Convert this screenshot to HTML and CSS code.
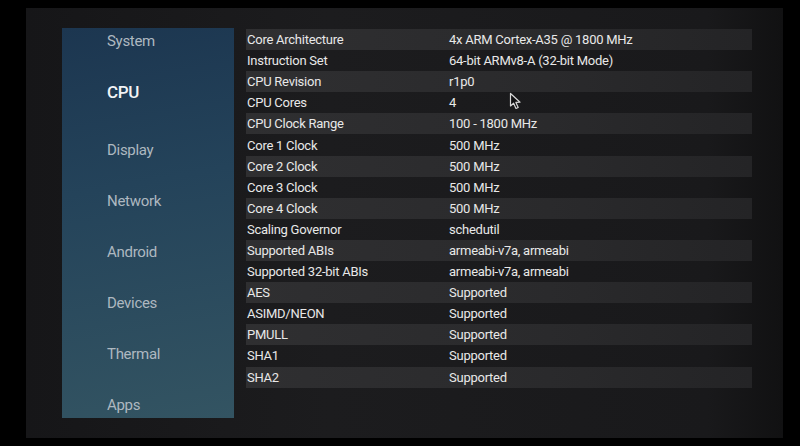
FILE: index.html
```html
<!DOCTYPE html>
<html lang="en">
<head>
    <title>CPU - Device Info</title>
    <meta charset="UTF-8" />
    <meta name="viewport" content="width=device-width, initial-scale=1.0" />
    <link rel="stylesheet" href="styles.css">
</head>
<body>
    <div class="screen">
        <aside class="sidebar">
            <ul class="menu">
                <li>System</li>
                <li class="active">CPU</li>
                <li>Display</li>
                <li>Network</li>
                <li>Android</li>
                <li>Devices</li>
                <li>Thermal</li>
                <li>Apps</li>
            </ul>
        </aside>

        <main class="details">
            <div class="row"><span class="label">Core Architecture</span><span class="value">4x ARM Cortex-A35 @ 1800 MHz</span></div>
            <div class="row"><span class="label">Instruction Set</span><span class="value">64-bit ARMv8-A (32-bit Mode)</span></div>
            <div class="row"><span class="label">CPU Revision</span><span class="value">r1p0</span></div>
            <div class="row"><span class="label">CPU Cores</span><span class="value">4</span></div>
            <div class="row"><span class="label">CPU Clock Range</span><span class="value">100 - 1800 MHz</span></div>
            <div class="row"><span class="label">Core 1 Clock</span><span class="value">500 MHz</span></div>
            <div class="row"><span class="label">Core 2 Clock</span><span class="value">500 MHz</span></div>
            <div class="row"><span class="label">Core 3 Clock</span><span class="value">500 MHz</span></div>
            <div class="row"><span class="label">Core 4 Clock</span><span class="value">500 MHz</span></div>
            <div class="row"><span class="label">Scaling Governor</span><span class="value">schedutil</span></div>
            <div class="row"><span class="label">Supported ABIs</span><span class="value">armeabi-v7a, armeabi</span></div>
            <div class="row"><span class="label">Supported 32-bit ABIs</span><span class="value">armeabi-v7a, armeabi</span></div>
            <div class="row"><span class="label">AES</span><span class="value">Supported</span></div>
            <div class="row"><span class="label">ASIMD/NEON</span><span class="value">Supported</span></div>
            <div class="row"><span class="label">PMULL</span><span class="value">Supported</span></div>
            <div class="row"><span class="label">SHA1</span><span class="value">Supported</span></div>
            <div class="row"><span class="label">SHA2</span><span class="value">Supported</span></div>
        </main>

        <!-- mouse pointer -->
        <svg class="pointer" width="14" height="18" viewBox="0 0 14 18">
            <path d="M1.5 1.5 L1.5 14 L4.6 11.2 L7 16.5 L9.2 15.5 L6.9 10.4 L11 10.2 Z" fill="#101012" stroke="#d8d8d8" stroke-width="1.2" stroke-linejoin="round"/>
        </svg>
    </div>
</body>
</html>
```

FILE: styles.css
```css
* {
    margin: 0;
    padding: 0;
    box-sizing: border-box;
}

body {
    background: #000;
    font-family: Roboto, "Noto Sans", sans-serif;
    width: 800px;
    height: 446px;
    overflow: hidden;
}

.screen {
    position: relative;
    display: flex;
    gap: 12px;
    width: 757px;
    height: 430px;
    margin: 8px 0 0 26px;
    padding: 20px 0 0 36px;
    background: linear-gradient(90deg, #161618, #1c1c1e 40%, #19191b 90%, #111112);
}

/* Left menu */
.sidebar {
    flex: 0 0 172px;
    height: 390px;
    overflow: hidden;
    padding-left: 45px;
    background: linear-gradient(170deg, #1c3650 0%, #24435a 40%, #335462 100%);
}

.menu {
    list-style: none;
    margin-top: -13px;
}

.menu li {
    height: 51px;
    display: flex;
    align-items: center;
    font-size: 15px;
    letter-spacing: -0.3px;
    color: #aeb8c0;
}

.menu li.active {
    font-size: 17px;
    font-weight: 500;
    color: #f2f4f6;
    margin-bottom: 7px;
}

/* Details table */
.details {
    flex: 0 0 506px;
    margin-top: 1px;
}

.row {
    display: flex;
    align-items: center;
    height: 21.1px;
    font-size: 13px;
    letter-spacing: -0.25px;
    color: #e8e8e8;
}

.row:nth-child(odd) {
    background: linear-gradient(90deg, #2f2f31, #2a2a2c 60%, #242426);
}

.label {
    width: 203px;
    padding-left: 1px;
}

.pointer {
    position: absolute;
    left: 483px;
    top: 84px;
}
```
